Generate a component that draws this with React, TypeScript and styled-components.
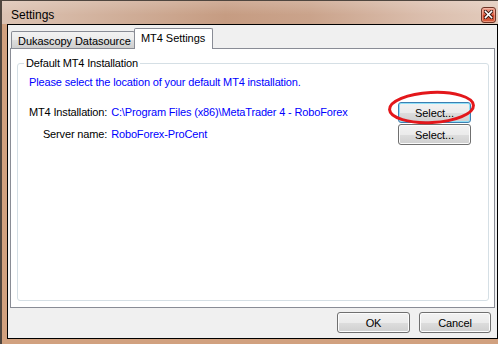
import styled, { createGlobalStyle } from 'styled-components';

const GlobalStyle = createGlobalStyle`
  html, body {
    margin: 0;
    padding: 0;
    background: #fff;
  }
  body {
    font-family: "Liberation Sans", Arial, sans-serif;
    font-size: 11px;
    letter-spacing: -0.15px;
    color: #000;
  }
`;

const Window = styled.div`
  width: 498px;
  height: 344px;
  box-sizing: border-box;
  border-left: 2px solid #4f463f;
  border-top: 1px solid #4f463f;
  background: #d1a17f;
  display: flex;
  flex-direction: column;
  overflow: hidden;
`;

const TitleBar = styled.div`
  height: 23px;
  box-sizing: border-box;
  padding: 4px 2px 0 9px;
  display: flex;
  align-items: center;
  justify-content: space-between;
  background:
    linear-gradient(to bottom, rgba(255, 255, 255, 0.18), rgba(255, 255, 255, 0) 60%),
    linear-gradient(to right, #dcc3b3 0%, #d1b09b 22%, #c69c82 45%, #caa38b 62%, #dbbead 85%, #e2cbbc 100%);
`;

const Title = styled.span`
  font-size: 12px;
  letter-spacing: normal;
  color: #000;
`;

const CloseButton = styled.div`
  width: 15px;
  height: 16px;
  box-sizing: border-box;
  border: 1px solid #6e3426;
  border-radius: 3px;
  background: linear-gradient(to bottom, #eda08e 0%, #df6d52 45%, #cc4226 55%, #d9603f 100%);
  box-shadow: inset 0 0 0 1px rgba(255, 215, 200, 0.45);
  display: flex;
  align-items: center;
  justify-content: center;
`;

const Frame = styled.div`
  flex: 1;
  display: flex;
  padding: 0 0 5px 5px;
`;

const Client = styled.div`
  flex: 1;
  border: 1px solid #000;
  background: #f0f0f0;
  display: flex;
  flex-direction: column;
`;

const TabControl = styled.div`
  margin: 0 2px;
  display: flex;
  flex-direction: column;
`;

const TabStrip = styled.div`
  height: 23px;
  padding-left: 1px;
  display: flex;
  align-items: flex-end;
`;

const Tab = styled.div<{ $active?: boolean }>`
  box-sizing: border-box;
  display: flex;
  align-items: center;
  padding-left: 6px;
  border: 1px solid #898c95;
  border-bottom: none;
  border-radius: 2px 2px 0 0;
  white-space: nowrap;
  letter-spacing: -0.05px;
  ${({ $active }) =>
    $active
      ? `
    position: relative;
    z-index: 1;
    width: 79px;
    height: 21px;
    margin-left: -1px;
    margin-bottom: -1px;
    padding-bottom: 2px;
    background: #fff;
  `
      : `
    width: 124px;
    height: 17px;
    padding-top: 1px;
    background: linear-gradient(to bottom, #f2f2f2 0%, #ebebeb 50%, #dddddd 51%, #cfcfcf 100%);
  `}
`;

const TabPanel = styled.div`
  height: 260px;
  box-sizing: border-box;
  border: 1px solid #898c95;
  background: #fff;
  padding: 8px 5px 6px 6px;
  display: flex;
  flex-direction: column;
`;

const GroupBox = styled.fieldset`
  flex: 1;
  margin: 0;
  padding: 0;
  min-width: 0;
  border: 1px solid #d5dfe5;
  border-radius: 3px;
`;

const GroupLegend = styled.legend`
  margin-left: 6px;
  padding: 0 2px;
  line-height: 13px;
`;

const GroupBody = styled.div`
  padding: 6px 17px 0 11px;
`;

const Intro = styled.p`
  margin: 0;
  line-height: 13px;
  color: #0000ff;
`;

const FieldGrid = styled.div`
  margin-top: 13px;
  display: grid;
  grid-template-columns: max-content 1fr 73px;
  column-gap: 4px;
  row-gap: 1px;
  align-items: center;
`;

const FieldLabel = styled.span`
  text-align: right;
  white-space: nowrap;
  line-height: 13px;
`;

const FieldValue = styled.span`
  color: #0000ff;
  white-space: nowrap;
  line-height: 13px;
`;

const Button = styled.button<{ $focused?: boolean; $width?: number }>`
  width: ${({ $width }) => $width ?? 73}px;
  height: 21px;
  box-sizing: border-box;
  padding: 0;
  font-family: "Liberation Sans", Arial, sans-serif;
  font-size: 11px;
  letter-spacing: -0.1px;
  color: #000;
  border-radius: 3px;
  border: 1px solid ${({ $focused }) => ($focused ? '#3c7fb1' : '#707070')};
  box-shadow: inset 0 0 0 1px ${({ $focused }) => ($focused ? '#8fe0f8' : '#fcfcfc')};
  background: linear-gradient(to bottom, #f2f2f2 0%, #ebebeb 50%, #dddddd 51%, #cfcfcf 100%);
`;

const Highlight = styled.div`
  position: relative;
  width: 73px;
  height: 21px;
`;

const Circle = styled.svg`
  position: absolute;
  left: -10px;
  top: -11px;
  overflow: visible;
  pointer-events: none;
`;

const Footer = styled.div`
  flex: 1;
  display: flex;
  justify-content: flex-end;
  align-items: flex-start;
  gap: 9px;
  padding: 4px 6px 0 0;
`;

export default function App() {
  return (
    <>
      <GlobalStyle />
      <Window>
        <TitleBar>
          <Title>Settings</Title>
          <CloseButton>
            <svg width="9" height="9" viewBox="0 0 9 9">
              <path d="M1.5 1.5 L7.5 7.5 M7.5 1.5 L1.5 7.5" stroke="#3b1a12" strokeWidth="3.4" strokeLinecap="square" />
              <path d="M1.5 1.5 L7.5 7.5 M7.5 1.5 L1.5 7.5" stroke="#fff" strokeWidth="1.6" strokeLinecap="square" />
            </svg>
          </CloseButton>
        </TitleBar>
        <Frame>
          <Client>
            <TabControl>
              <TabStrip>
                <Tab>Dukascopy Datasource</Tab>
                <Tab $active>MT4 Settings</Tab>
              </TabStrip>
              <TabPanel>
                <GroupBox>
                  <GroupLegend>Default MT4 Installation</GroupLegend>
                  <GroupBody>
                    <Intro>Please select the location of your default MT4 installation.</Intro>
                    <FieldGrid>
                      <FieldLabel>MT4 Installation:</FieldLabel>
                      <FieldValue>C:\Program Files (x86)\MetaTrader 4 - RoboForex</FieldValue>
                      <Highlight>
                        <Button $focused>Select...</Button>
                        <Circle width="87" height="33" viewBox="0 0 87 33">
                          <ellipse
                            cx="43.5"
                            cy="16.5"
                            rx="42"
                            ry="15"
                            fill="none"
                            stroke="#e3171b"
                            strokeWidth="3"
                            transform="rotate(-3 43.5 16.5)"
                          />
                        </Circle>
                      </Highlight>
                      <FieldLabel>Server name:</FieldLabel>
                      <FieldValue>RoboForex-ProCent</FieldValue>
                      <Button>Select...</Button>
                    </FieldGrid>
                  </GroupBody>
                </GroupBox>
              </TabPanel>
            </TabControl>
            <Footer>
              <Button>OK</Button>
              <Button $width={72}>Cancel</Button>
            </Footer>
          </Client>
        </Frame>
      </Window>
    </>
  );
}
